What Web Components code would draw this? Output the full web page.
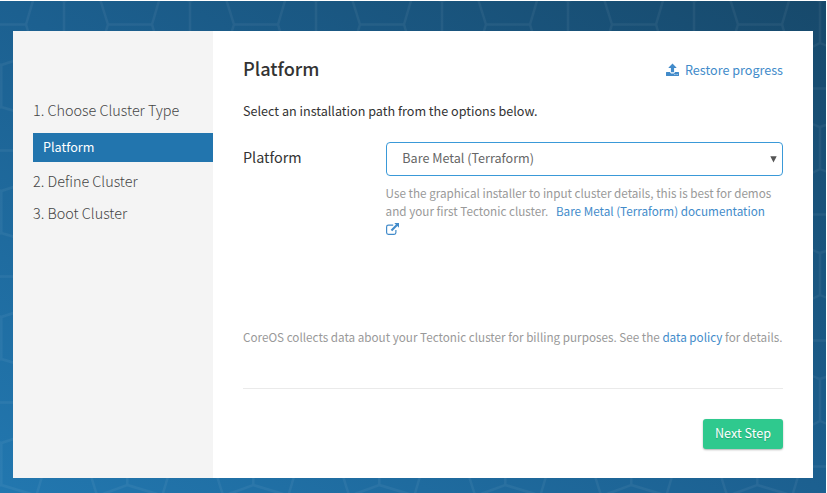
<!DOCTYPE html>
<html lang="en">
<head>
<meta charset="utf-8">
<title>Platform</title>
<style>
html, body { margin: 0; height: 100%; }
body { background: #fff; overflow: hidden; color: #333; font: 12.6px/20px "Noto Sans CJK JP", "Noto Sans", sans-serif; }
</style>
</head>
<body>
<installer-page>
  <step-nav slot="nav">
    <nav-heading>1. Choose Cluster Type</nav-heading>
    <nav-item>Platform</nav-item>
    <nav-heading>2. Define Cluster</nav-heading>
    <nav-heading>3. Boot Cluster</nav-heading>
  </step-nav>
  <wizard-header>Platform<restore-link slot="action">Restore progress</restore-link></wizard-header>
  <intro-text>Select an installation path from the options below.</intro-text>
  <form-row>
    <span slot="label">Platform</span>
    <select-box>Bare Metal (Terraform)</select-box>
    <help-text slot="help">Use the graphical installer to input cluster details, this is best for demos and your first Tectonic cluster. <doc-link>Bare Metal (Terraform) documentation</doc-link></help-text>
  </form-row>
  <policy-note>CoreOS collects data about your Tectonic cluster for billing purposes. See the <text-link>data policy</text-link> for details.</policy-note>
  <wizard-footer><primary-button>Next Step</primary-button></wizard-footer>
</installer-page>
<script>
const define = (name, css, html = '<slot></slot>') => {
  const template = document.createElement('template');
  template.innerHTML = `<style>${css}</style>${html}`;
  customElements.define(name, class extends HTMLElement {
    constructor() {
      super();
      this.attachShadow({ mode: 'open' }).append(template.content.cloneNode(true));
    }
  });
};

define('hex-backdrop', `
  :host { display: block; background: linear-gradient(to top right, #2277af, #1c6090 50%, #17496b); }
  svg { display: block; width: 100%; height: 100%; }`,
  `<svg aria-hidden="true"><defs><pattern id="p" width="126" height="126" patternUnits="userSpaceOnUse">
    <path fill="none" stroke="#fff" stroke-opacity=".05" stroke-width="2.4" d="
      M0 23.5H26L45 87.5H88L108 23.5H126
      M26 23.5L33.5 -2M108 23.5L100 -2
      M45 87.5L33.5 126M88 87.5L100 126
      M64 0V42L36 56M64 42L98 56
      M64 0L58 -2M64 0L70 -2M64 126L36 115M64 126L98 115
      M1.3 64V106L31 115M1.3 106L-2 107M127.3 106L103 115
      M1.3 64L35 53M1.3 64L-2 63M127.3 64L99 53"/>
  </pattern></defs><rect width="100%" height="100%" fill="url(#p)"/></svg>`);

define('installer-page', `
  :host { display: grid; grid-template: 492px / 826px; padding-top: 1px; }
  hex-backdrop, .card { grid-area: 1 / 1; }
  .card { display: grid; grid-template-columns: 200px 600px; height: 447px; margin: 30px 13px 0; z-index: 1; background: #fff; }
  main { padding: 25px 30px 0; display: flex; flex-direction: column; }`,
  `<hex-backdrop></hex-backdrop><div class="card"><slot name="nav"></slot><main><slot></slot></main></div>`);

define('step-nav', `:host { display: flex; flex-direction: column; background: #f4f4f4; padding: 63px 0 0 20px; }`);
define('nav-heading', `:host { display: block; font-size: 14.4px; font-weight: 300; line-height: 20px; padding: 6px 0; color: #444; }`);
define('nav-item', `:host { display: block; box-sizing: border-box; height: 29px; margin: 7px 0 3px; padding: 0 10px; line-height: 27px; color: #fff; background: #2275ae; }`);

define('wizard-header', `
  :host { display: flex; justify-content: space-between; align-items: flex-start; height: 24px; }
  h1 { margin: 0; font-size: 18.2px; font-weight: 500; line-height: 24px; }`,
  `<h1><slot></slot></h1><slot name="action"></slot>`);
define('restore-link', `
  :host { display: inline-flex; gap: 6px; color: #428bca; line-height: 20px; margin-top: 4px; }
  svg { width: 13px; height: 14px; margin: 3px 0 0; }`,
  `<svg viewBox="0 0 13 14" fill="currentColor"><path d="M6.5 .4L10.4 4.4V5.1H8.1V9.2H4.9V5.1H2.6V4.4ZM.5 9H4Q4.4 10.4 5.2 10.4H7.8Q8.6 10.4 9 9H12.5Q13 9 13 9.5V12.5Q13 13 12.5 13H.5Q0 13 0 12.5V9.5Q0 9 .5 9Z"/><path fill="#fff" d="M8.4 11.2h1v.7h-1zM10.6 11.2h1v.7h-1z"/></svg><span><slot></slot></span>`);

define('intro-text', `:host { display: block; margin-top: 21px; }`);

define('form-row', `
  :host { display: grid; grid-template-columns: 142.6px 397.4px; margin-top: 21px; }
  .label { font-size: 14.4px; line-height: 20px; padding-top: 5px; }
  .field { display: flex; flex-direction: column; gap: 8px; }`,
  `<div class="label"><slot name="label"></slot></div><div class="field"><slot></slot><slot name="help"></slot></div>`);
define('select-box', `
  :host { display: flex; justify-content: space-between; box-sizing: border-box; height: 34px; padding: 0 5px 0 15.7px; border: 1px solid #3a99d8; border-radius: 4px; line-height: 30px; color: #666; }
  svg { width: 7px; height: 7px; margin-top: 13px; }`,
  `<span><slot></slot></span><svg viewBox="0 0 7 7"><path fill="#555" d="M.3 .3H6.7L3.5 6.5Z"/></svg>`);
define('help-text', `:host { display: block; padding-right: 8px; font-size: 11.7px; line-height: 18px; color: #999; }`);
define('doc-link', `
  :host { color: #428bca; margin-left: 5px; }
  svg { width: 13px; height: 12px; vertical-align: -1px; }`,
  `<slot></slot> <svg viewBox="0 0 13 12"><path fill="none" stroke="currentColor" stroke-width="1.2" d="M7.2 2.1H2.4Q.6 2.1 .6 3.9V9.6Q.6 11.4 2.4 11.4H8.1Q9.9 11.4 9.9 9.6V7"/><path fill="currentColor" d="M8.3 0H13V4.7L11.4 3.1L6.2 8.3L4.7 6.8L9.9 1.6Z"/></svg>`);

define('policy-note', `:host { display: block; margin-top: 90px; font-size: 11.69px; line-height: 18px; color: #999; white-space: nowrap; }`);
define('text-link', `:host { color: #428bca; }`);
define('wizard-footer', `:host { display: flex; justify-content: flex-end; margin-top: 42px; padding-top: 30px; border-top: 1px solid #eaeaea; }`);
define('primary-button', `
  :host { display: block; }
  button { display: block; width: 80px; height: 30px; padding: 0 0 2px; border: 0; border-radius: 3px; background: #2fc98e; color: #fff; font: inherit; line-height: 28px; text-shadow: 0 1px 1px rgba(0,0,0,.2); box-shadow: 0 1px 2px rgba(0,0,0,.3); }`,
  `<button type="button"><slot></slot></button>`);
</script>
</body>
</html>
